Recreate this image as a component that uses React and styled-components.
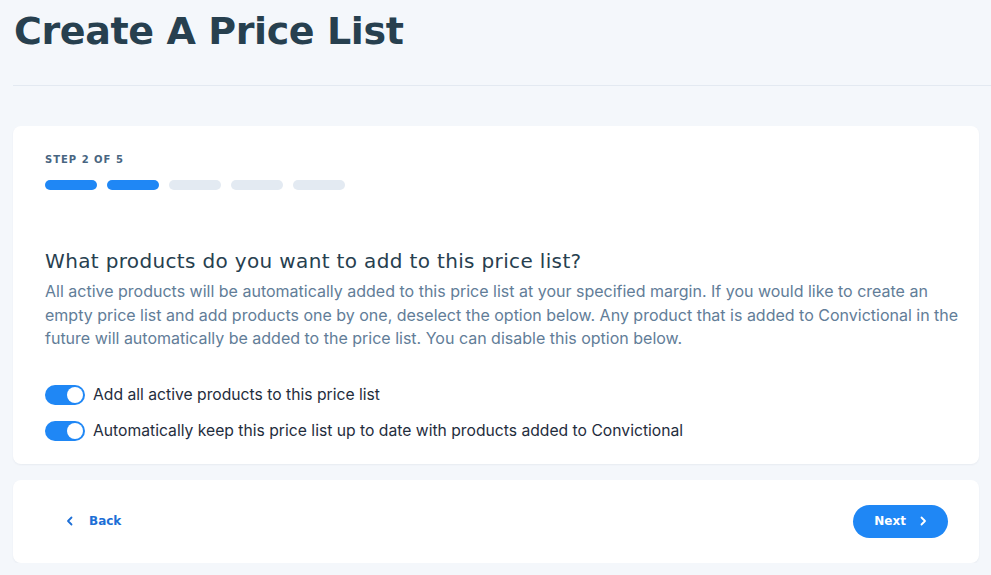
import React from 'react';
import styled, { createGlobalStyle } from 'styled-components';

const GlobalStyle = createGlobalStyle`
  html, body {
    margin: 0;
    padding: 0;
    background: #f4f7fb;
  }
  * { box-sizing: border-box; }
`;

const blue = '#1f87f5';
const heading = '#27404f';

const Page = styled.div`
  padding: 0 12px 0 13px;
  font-family: Inter, "Noto Sans", sans-serif;
`;

const Header = styled.header`
  padding: 8px 0 0 1px;
  height: 86px;
  border-bottom: 1px solid #e3e9f1;
  margin-right: -12px;
`;

const Title = styled.h1`
  margin: 0;
  font-family: "DejaVu Sans", sans-serif;
  font-weight: 700;
  font-size: 38px;
  line-height: 46px;
  letter-spacing: -0.4px;
  color: ${heading};
`;

const Card = styled.section`
  background: #fff;
  border-radius: 8px;
  box-shadow: 0 1px 2px rgba(36, 59, 83, 0.06);
  padding: ${p => p.$pad};
  margin-top: ${p => p.$top};
`;

const StepLabel = styled.div`
  font-family: "DejaVu Sans", sans-serif;
  font-size: 10px;
  font-weight: 600;
  letter-spacing: 1px;
  color: #486581;
  line-height: 14px;
`;

const Steps = styled.div`
  display: flex;
  gap: 10px;
  margin-top: 13px;
`;

const StepBar = styled.span`
  width: 52px;
  height: 10px;
  border-radius: 5px;
  background: ${p => (p.$done ? blue : '#e3eaf2')};
`;

const Question = styled.h2`
  margin: 58px 0 0;
  font-family: "DejaVu Sans", sans-serif;
  font-weight: 400;
  font-size: 20px;
  line-height: 26px;
  letter-spacing: 0.35px;
  color: ${heading};
`;

const Text = styled.p`
  margin: 6px 0 0;
  font-size: 16px;
  line-height: 23.5px;
  color: #627d98;
  white-space: nowrap;
`;

const Options = styled.div`
  display: flex;
  flex-direction: column;
  gap: 16px;
  margin-top: 34px;
`;

const Option = styled.label`
  display: flex;
  align-items: center;
  gap: 8px;
  font-size: 15.7px;
  color: #1f2d3d;
  line-height: 20px;
`;

const Toggle = styled.span`
  position: relative;
  width: 40px;
  height: 20px;
  border-radius: 10px;
  background: ${blue};
  flex-shrink: 0;

  &::after {
    content: '';
    position: absolute;
    right: 2px;
    top: 2px;
    width: 16px;
    height: 16px;
    border-radius: 50%;
    background: #fff;
  }
`;

const Footer = styled.div`
  display: flex;
  align-items: center;
  justify-content: space-between;
`;

const BackButton = styled.button`
  display: flex;
  align-items: center;
  gap: 14px;
  border: none;
  background: none;
  padding: 0;
  font-family: "DejaVu Sans", sans-serif;
  font-weight: 700;
  font-size: 12px;
  color: #1d6fd6;
`;

const NextButton = styled.button`
  display: flex;
  align-items: center;
  gap: 12px;
  height: 33px;
  padding: 0 20px 0 21px;
  border: none;
  border-radius: 17px;
  background: ${blue};
  color: #fff;
  font-family: "DejaVu Sans", sans-serif;
  font-weight: 700;
  font-size: 12px;
`;

const Chevron = ({ dir }) => (
  <svg width="10" height="10" viewBox="0 0 10 10" fill="none">
    <path
      d={dir === 'left' ? 'M6.5 1.5 3 5l3.5 3.5' : 'M3.5 1.5 7 5 3.5 8.5'}
      stroke="currentColor"
      strokeWidth="1.8"
      strokeLinecap="round"
      strokeLinejoin="round"
    />
  </svg>
);

const App = () => {
  const steps = [true, true, false, false, false];
  return (
    <Page>
      <GlobalStyle />
      <Header>
        <Title>Create A Price List</Title>
      </Header>

      <Card $pad="27px 24px 23px 32px" $top="40px">
        <StepLabel>STEP 2 OF 5</StepLabel>
        <Steps>
          {steps.map((done, i) => (
            <StepBar key={i} $done={done} />
          ))}
        </Steps>
        <Question>What products do you want to add to this price list?</Question>
        <Text>
          All active products will be automatically added to this price list at your specified margin. If you would like to create an
          <br />
          empty price list and add products one by one, deselect the option below. Any product that is added to Convictional in the
          <br />
          future will automatically be added to the price list. You can disable this option below.
        </Text>
        <Options>
          <Option>
            <Toggle />
            Add all active products to this price list
          </Option>
          <Option>
            <Toggle />
            Automatically keep this price list up to date with products added to Convictional
          </Option>
        </Options>
      </Card>

      <Card $pad="25px 31px 25px 52px" $top="16px">
        <Footer>
          <BackButton>
            <Chevron dir="left" />
            Back
          </BackButton>
          <NextButton>
            Next
            <Chevron dir="right" />
          </NextButton>
        </Footer>
      </Card>
    </Page>
  );
};

export default App;
